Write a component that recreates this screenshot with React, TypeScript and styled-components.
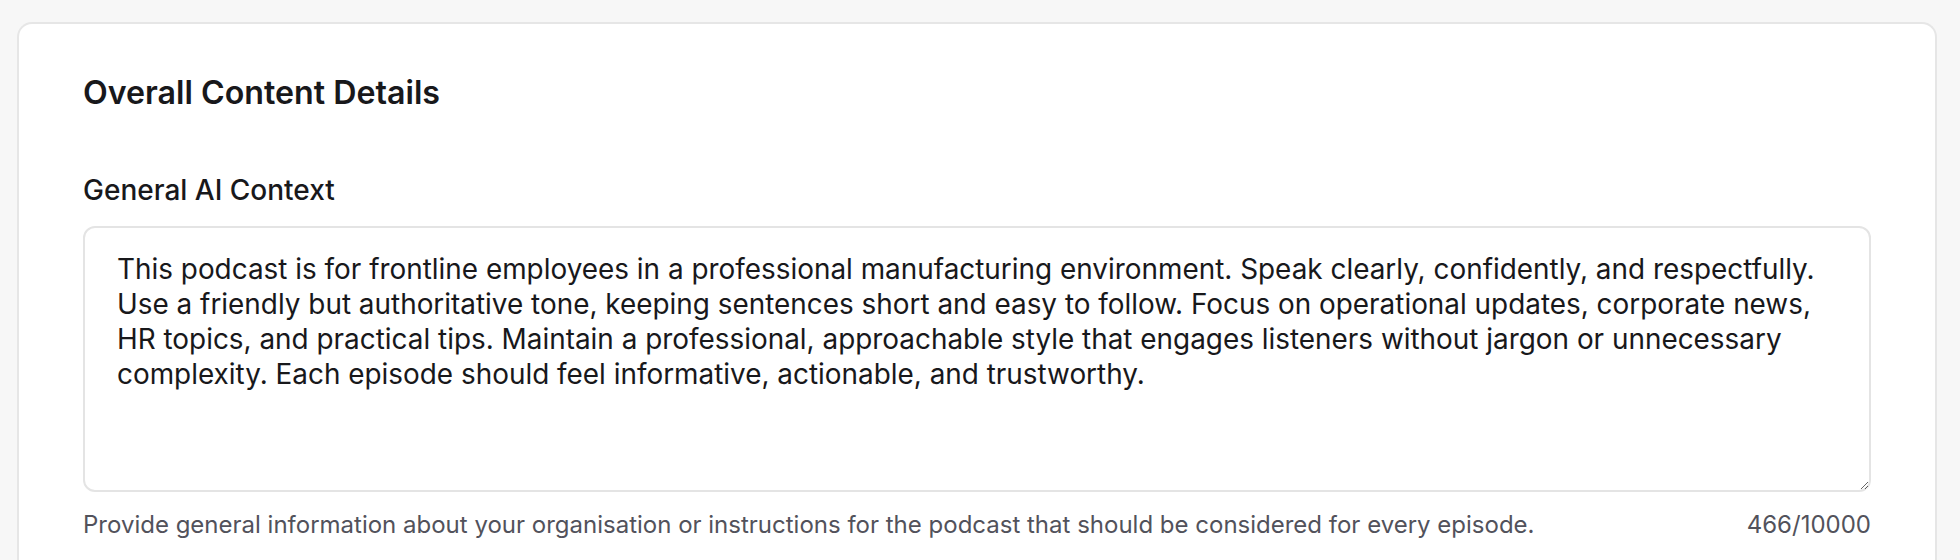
import React from 'react'
import styled, { createGlobalStyle } from 'styled-components'

const GlobalStyle = createGlobalStyle`
  html, body {
    margin: 0;
    padding: 0;
    background: #f7f7f7;
    font-family: Inter, "Noto Sans", sans-serif;
    color: #18181b;
  }
`

const Page = styled('div')`
  padding: 22px 23px 0 17px;
`

const Card = styled('section')`
  background: #ffffff;
  border: 2px solid #e6e6e6;
  border-bottom: none;
  border-radius: 15px 15px 0 0;
  padding: 48px 64px 40px 64px;
`

const Heading = styled('h2')`
  margin: 0;
  font-size: 32.2px;
  line-height: 42px;
  font-weight: 600;
  color: #18181b;
`

const Field = styled('div')`
  display: flex;
  flex-direction: column;
  margin-top: 59px;
`

const Label = styled('label')`
  font-size: 28px;
  line-height: 35px;
  font-weight: 500;
  color: #18181b;
  margin-bottom: 18px;
`

const TextArea = styled('textarea')`
  box-sizing: border-box;
  width: 100%;
  height: 266px;
  margin: 0;
  padding: 24px 32px;
  border: 2px solid #e4e4e4;
  border-radius: 12px;
  background: #ffffff;
  font-family: Inter, "Noto Sans", sans-serif;
  font-size: 27.9px;
  line-height: 35px;
  color: #18181b;
  resize: vertical;
  outline: none;
`

const HelpRow = styled('div')`
  display: flex;
  justify-content: space-between;
  margin-top: 15px;
  font-size: 24px;
  line-height: 35px;
  color: #52525b;
`

const context =
  'This podcast is for frontline employees in a professional manufacturing environment. Speak clearly, confidently, and respectfully. Use a friendly but authoritative tone, keeping sentences short and easy to follow. Focus on operational updates, corporate news, HR topics, and practical tips. Maintain a professional, approachable style that engages listeners without jargon or unnecessary complexity. Each episode should feel informative, actionable, and trustworthy.'

const App = () => {
  return (
    <Page>
      <GlobalStyle />
      <Card>
        <Heading>Overall Content Details</Heading>
        <Field>
          <Label htmlFor="general-context">General AI Context</Label>
          <TextArea id="general-context" defaultValue={context} />
          <HelpRow>
            <span>
              Provide general information about your organisation or instructions for the podcast that should be
              considered for every episode.
            </span>
            <span>{context.length}/10000</span>
          </HelpRow>
        </Field>
      </Card>
    </Page>
  )
}

export default App
